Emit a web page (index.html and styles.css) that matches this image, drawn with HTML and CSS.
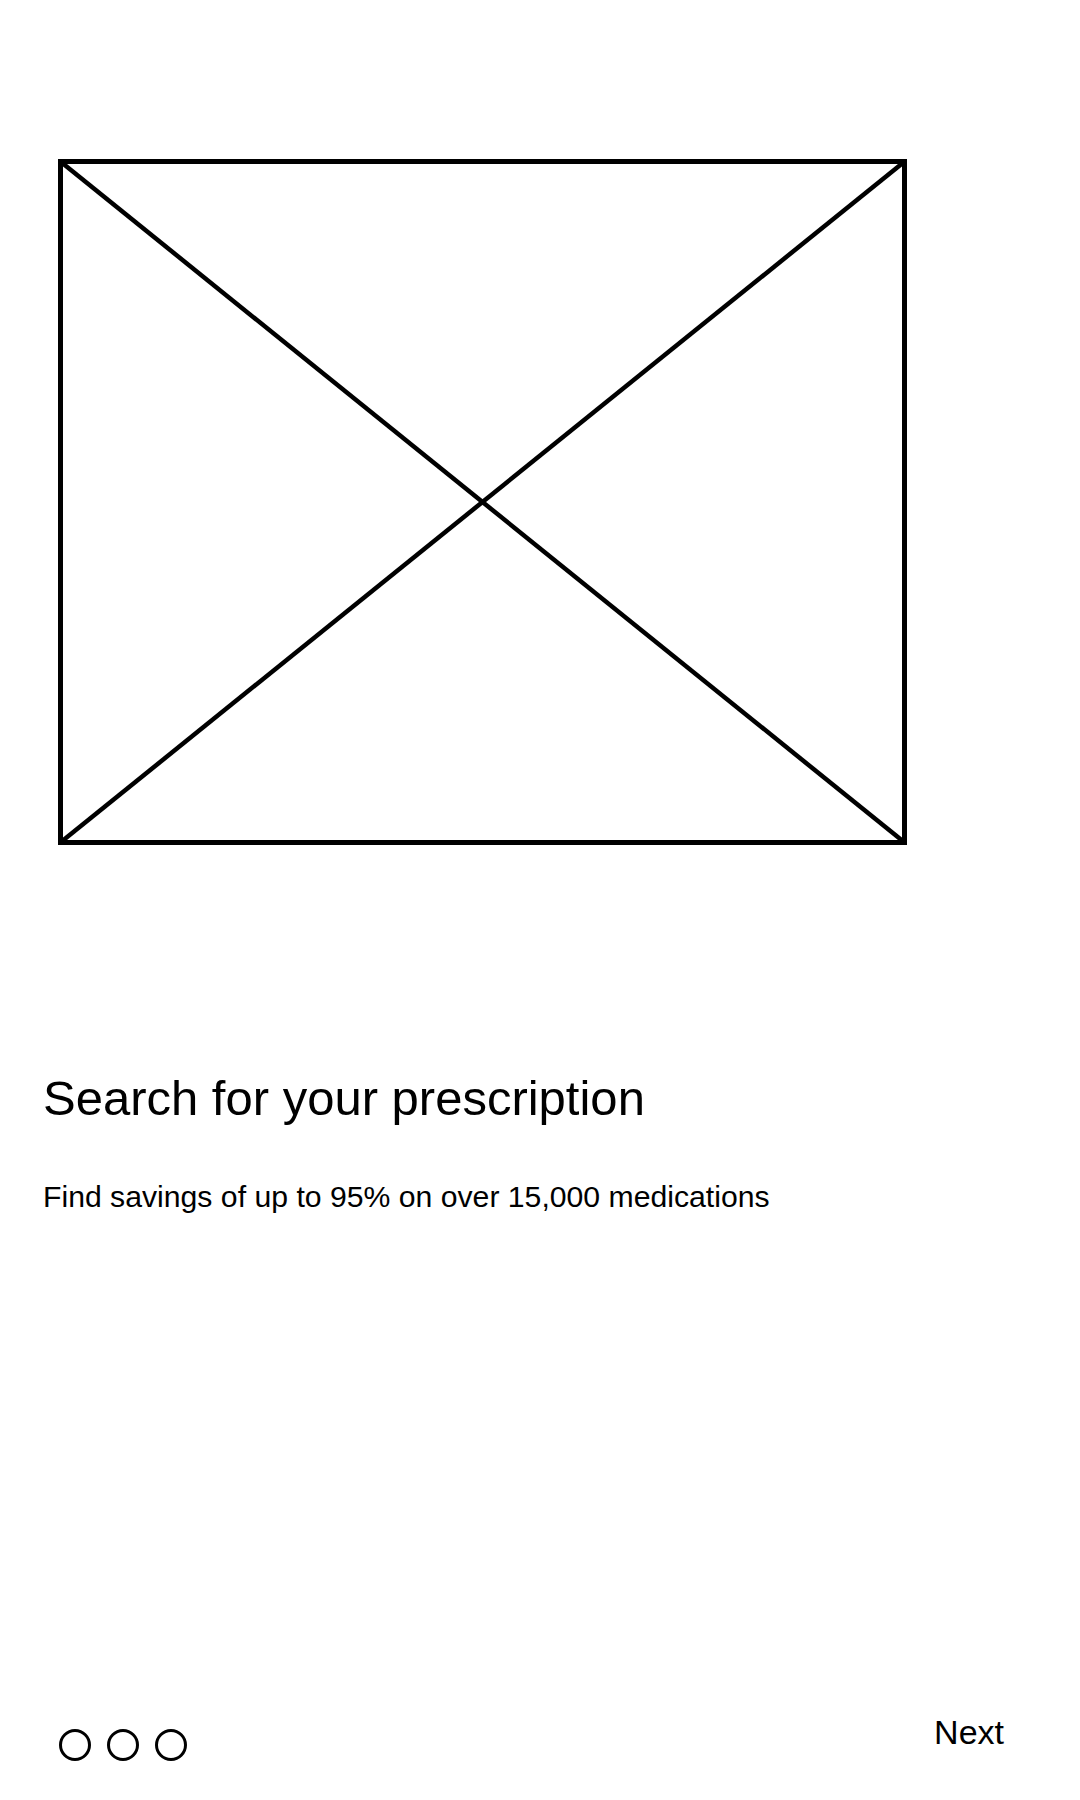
FILE: index.html
```html
<!DOCTYPE html>
<html lang="en">
<head>
<meta charset="utf-8">
<title>Onboarding</title>
<link rel="stylesheet" href="styles.css">
</head>
<body>
<main class="page">
  <div class="hero">
    <svg class="placeholder" width="849" height="686" viewBox="0 0 849 686" aria-hidden="true">
      <rect x="2.5" y="2.5" width="844" height="681" fill="none" stroke="#000" stroke-width="5"/>
      <line x1="3" y1="3" x2="846" y2="683" stroke="#000" stroke-width="4.5"/>
      <line x1="846" y1="3" x2="3" y2="683" stroke="#000" stroke-width="4.5"/>
    </svg>
  </div>
  <section class="copy">
    <h1 class="title">Search for your prescription</h1>
    <p class="subtitle">Find savings of up to 95% on over 15,000 medications</p>
  </section>
  <footer class="footer">
    <div class="dots">
      <span class="dot"></span>
      <span class="dot"></span>
      <span class="dot"></span>
    </div>
    <span class="next">Next</span>
  </footer>
</main>
</body>
</html>
```

FILE: styles.css
```css
html, body {
  margin: 0;
  padding: 0;
  background: #fff;
}

body {
  font-family: "Liberation Sans", Arial, sans-serif;
  color: #000;
}

.page {
  display: flex;
  flex-direction: column;
  height: 1800px;
  box-sizing: border-box;
}

.hero {
  padding: 159px 0 0 58px;
}

.placeholder {
  display: block;
}

.copy {
  margin-top: 225px;
  padding-left: 43px;
}

.title {
  margin: 0;
  font-size: 49px;
  line-height: 56px;
  font-weight: 400;
}

.subtitle {
  margin: 53px 0 0;
  font-size: 30.2px;
  line-height: 36px;
}

.footer {
  margin-top: auto;
  display: flex;
  justify-content: space-between;
  align-items: flex-start;
  padding: 0 76px 39px 59px;
}

.dots {
  display: flex;
  gap: 16px;
  margin-top: 15px;
}

.dot {
  width: 32px;
  height: 32px;
  box-sizing: border-box;
  border: 3px solid #000;
  border-radius: 50%;
}

.next {
  font-size: 34px;
  line-height: 36px;
}
```
